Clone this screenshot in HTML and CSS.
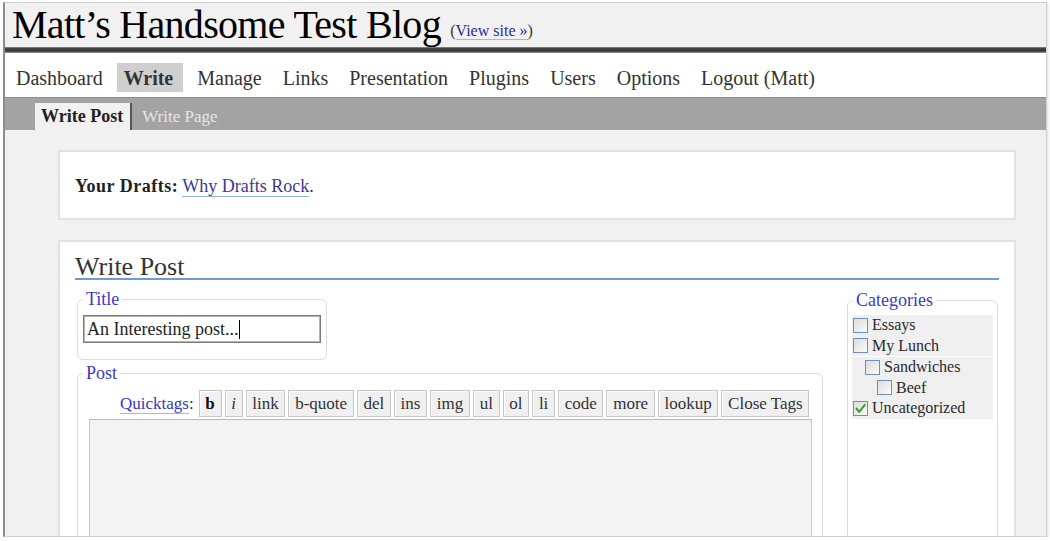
FILE: index.html
```html
<!DOCTYPE html>
<html lang="en">
<head>
<meta charset="utf-8">
<title>Write Post ‹ Matt’s Handsome Test Blog</title>
<link rel="stylesheet" href="styles.css">
</head>
<body>
<div class="window">
  <div class="header">
    <h1>Matt’s Handsome Test Blog <span class="viewsite">(<a href="#">View site »</a>)</span></h1>
  </div>
  <div class="darkbar"></div>
  <ul class="nav">
    <li><a href="#">Dashboard</a></li>
    <li class="current"><a href="#">Write</a></li>
    <li><a href="#">Manage</a></li>
    <li><a href="#">Links</a></li>
    <li><a href="#">Presentation</a></li>
    <li><a href="#">Plugins</a></li>
    <li><a href="#">Users</a></li>
    <li><a href="#">Options</a></li>
    <li><a href="#">Logout (Matt)</a></li>
  </ul>
  <ul class="subnav">
    <li class="current"><a href="#">Write Post</a></li>
    <li><a href="#">Write Page</a></li>
  </ul>
  <div class="content">
    <div class="wrap drafts">
      <strong>Your Drafts:</strong> <a href="#">Why Drafts Rock</a>.
    </div>
    <div class="wrap write">
      <h2>Write Post</h2>
      <div class="cols">
        <div class="main">
          <fieldset class="titlediv">
            <legend>Title</legend>
            <div class="input">An Interesting post...<span class="caret"></span></div>
          </fieldset>
          <fieldset class="postdiv">
            <legend>Post</legend>
            <div class="quicktags">
              <span class="qlabel"><a href="#">Quicktags</a>:</span>
              <span class="btn bold">b</span>
              <span class="btn ital">i</span>
              <span class="btn">link</span>
              <span class="btn">b-quote</span>
              <span class="btn">del</span>
              <span class="btn">ins</span>
              <span class="btn">img</span>
              <span class="btn">ul</span>
              <span class="btn">ol</span>
              <span class="btn">li</span>
              <span class="btn">code</span>
              <span class="btn">more</span>
              <span class="btn">lookup</span>
              <span class="btn">Close Tags</span>
            </div>
            <div class="textarea"></div>
          </fieldset>
        </div>
        <fieldset class="cats">
          <legend>Categories</legend>
          <div class="catlist">
            <div class="catblock">
              <div class="cat"><span class="cb"></span>Essays</div>
              <div class="cat"><span class="cb"></span>My Lunch</div>
            </div>
            <div class="catblock second">
              <div class="cat lvl1"><span class="cb"></span>Sandwiches</div>
              <div class="cat lvl2"><span class="cb"></span>Beef</div>
              <div class="cat"><span class="cb checked"><svg viewBox="0 0 13 13" width="13" height="13"><path d="M2.5 6.5 L5.2 9.8 L10.8 2.8" fill="none" stroke="#2ea12e" stroke-width="2" stroke-linecap="round" stroke-linejoin="round"/></svg></span>Uncategorized</div>
            </div>
          </div>
        </fieldset>
      </div>
    </div>
  </div>
</div>
</body>
</html>
```
FILE: styles.css
```css
html, body {
  margin: 0;
  padding: 0;
  background: #ffffff;
}

body {
  font-family: "Liberation Serif", "Times New Roman", serif;
  color: #333;
}

a {
  text-decoration: none;
}

.window {
  margin: 2px 3px 0 3px;
  width: 1041px;
  height: 533px;
  border-left: 2px solid #8c8c8c;
  border-top: 1px solid #cfcfcf;
  border-right: 1px solid #d2d2d2;
  border-bottom: 1px solid #d2d2d2;
  box-shadow: 1px 1px 2px rgba(0, 0, 0, 0.15);
  overflow: hidden;
  display: flex;
  flex-direction: column;
}

/* header */
.header {
  height: 44px;
  background: #f1f1f1;
  padding-left: 7px;
  flex: none;
}

.header h1 {
  margin: 0;
  font-size: 40px;
  line-height: 44px;
  font-weight: normal;
  letter-spacing: -0.7px;
  color: #000;
  white-space: nowrap;
}

.viewsite {
  font-size: 16px;
  letter-spacing: 0;
  color: #333;
  vertical-align: 2px;
}

.viewsite a {
  color: #2d2d96;
  border-bottom: 1px solid #9dbbe2;
}

.darkbar {
  height: 6px;
  flex: none;
  background: linear-gradient(to bottom, #9a9a9a 0, #4a4a4a 20%, #333 50%, #505050 80%, #a8a8a8 100%);
}

/* main nav */
.nav {
  list-style: none;
  margin: 0;
  padding: 10px 0 0 4px;
  height: 34px;
  background: #fff;
  border-bottom: 1px solid #8a8a8a;
  display: flex;
  align-items: flex-start;
  gap: 7px;
  flex: none;
}

.nav li a {
  display: block;
  padding: 0 7px;
  height: 29px;
  line-height: 30px;
  font-size: 20px;
  color: #333;
}

.nav li.current a {
  background: #cfcfcf;
  font-weight: bold;
  padding: 0 10px 0 7px;
}

/* sub nav */
.subnav {
  list-style: none;
  margin: 0;
  padding: 5px 0 0 30px;
  height: 27px;
  background: #a3a3a3;
  display: flex;
  align-items: flex-end;
  flex: none;
}

.subnav li a {
  display: block;
  height: 27px;
  line-height: 27px;
  font-size: 17px;
  color: #e6e6e6;
  padding: 0 0 0 10px;
}

.subnav li.current a {
  background: #f1f1f1;
  color: #222;
  font-weight: bold;
  font-size: 18px;
  padding: 0 7px 0 6px;
  border-right: 2px solid #555;
}

/* content */
.content {
  flex: 1;
  background: #f1f1f1;
  overflow: hidden;
  padding-top: 20px;
}

.wrap {
  margin: 0 30px 20px 53px;
  background: #fff;
  border: 2px solid #e2e2e2;
}

.drafts {
  padding: 24px 15px 22px;
  font-size: 18px;
  line-height: 20px;
  color: #333;
}

.drafts strong {
  color: #222;
  letter-spacing: 0.5px;
}

.drafts a {
  color: #3a3a94;
  border-bottom: 1px solid #8fb2e0;
}

.write {
  padding: 0 15px;
  height: 400px;
}

.write h2 {
  margin: 0;
  padding-top: 14px;
  font-size: 26px;
  line-height: 22px;
  font-weight: normal;
  color: #333;
  border-bottom: 2px solid #6f9bd3;
}

.cols {
  display: flex;
  align-items: flex-start;
}

.main {
  width: 746px;
  margin-left: 2px;
}

fieldset {
  margin: 0;
  border: 1px solid #dcdcdc;
  border-radius: 6px;
  padding: 0 5px;
  min-width: 0;
}

legend {
  padding: 0 3px;
  font-size: 18px;
  line-height: 20px;
  color: #3b3bc4;
}

.titlediv {
  width: 238px;
  margin-top: 9px;
  padding-bottom: 16px;
}

.input {
  margin-top: 6px;
  height: 24px;
  border: 1px solid #7a7a7a;
  box-shadow: inset 0 0 0 1px #b4b4b4;
  padding: 1px 3px;
  font-size: 18px;
  line-height: 24px;
  color: #222;
  white-space: nowrap;
  display: flex;
  align-items: center;
}

.caret {
  display: inline-block;
  width: 1px;
  height: 19px;
  background: #000;
  margin-left: 1px;
}

.postdiv {
  margin-top: 3px;
  height: 300px;
}

.quicktags {
  margin: 7px 0 0 6px;
  padding-left: 31px;
  display: flex;
  align-items: baseline;
  gap: 3px;
  font-size: 17px;
}

.qlabel {
  margin-right: 2px;
  color: #333;
}

.qlabel a {
  color: #3636c2;
  border-bottom: 1px solid #9dbbe2;
}

.btn {
  display: inline-block;
  height: 25px;
  line-height: 25px;
  padding: 0 5.7px;
  border: 1px solid #c6c6c6;
  background: #f0f0f0;
  box-shadow: inset 1px 1px 0 #fbfbfb;
  color: #333;
}

.btn.bold {
  font-weight: bold;
  color: #111;
}

.btn.ital {
  font-style: italic;
}

.textarea {
  margin: 2px 5px 0 6px;
  height: 200px;
  background: #f3f3f3;
  border: 1px solid #c9c9c9;
  border-top-color: #b8b8b8;
}

.cats {
  width: 141px;
  margin-left: auto;
  margin-right: 1px;
  margin-top: 10px;
  padding: 0 4px;
  height: 300px;
}

.cats legend {
  margin-left: 1px;
}

.catlist {
  margin-top: 5px;
}

.catblock {
  background: #efefef;
}

.catblock.second {
  border-top: 1px solid #fff;
}

.cat {
  display: flex;
  align-items: center;
  height: 20.5px;
  padding-left: 1px;
  font-size: 16px;
  color: #2a2a2a;
  white-space: nowrap;
}

.cat.lvl1 {
  padding-left: 13px;
}

.cat.lvl2 {
  padding-left: 25px;
}

.cb {
  flex: none;
  width: 13px;
  height: 13px;
  border: 1px solid #6f8fb4;
  background: linear-gradient(to bottom right, #dcdcdc, #fbfbfb);
  margin-right: 4px;
  display: flex;
  align-items: center;
  justify-content: center;
}

.cb svg {
  display: block;
}
```
